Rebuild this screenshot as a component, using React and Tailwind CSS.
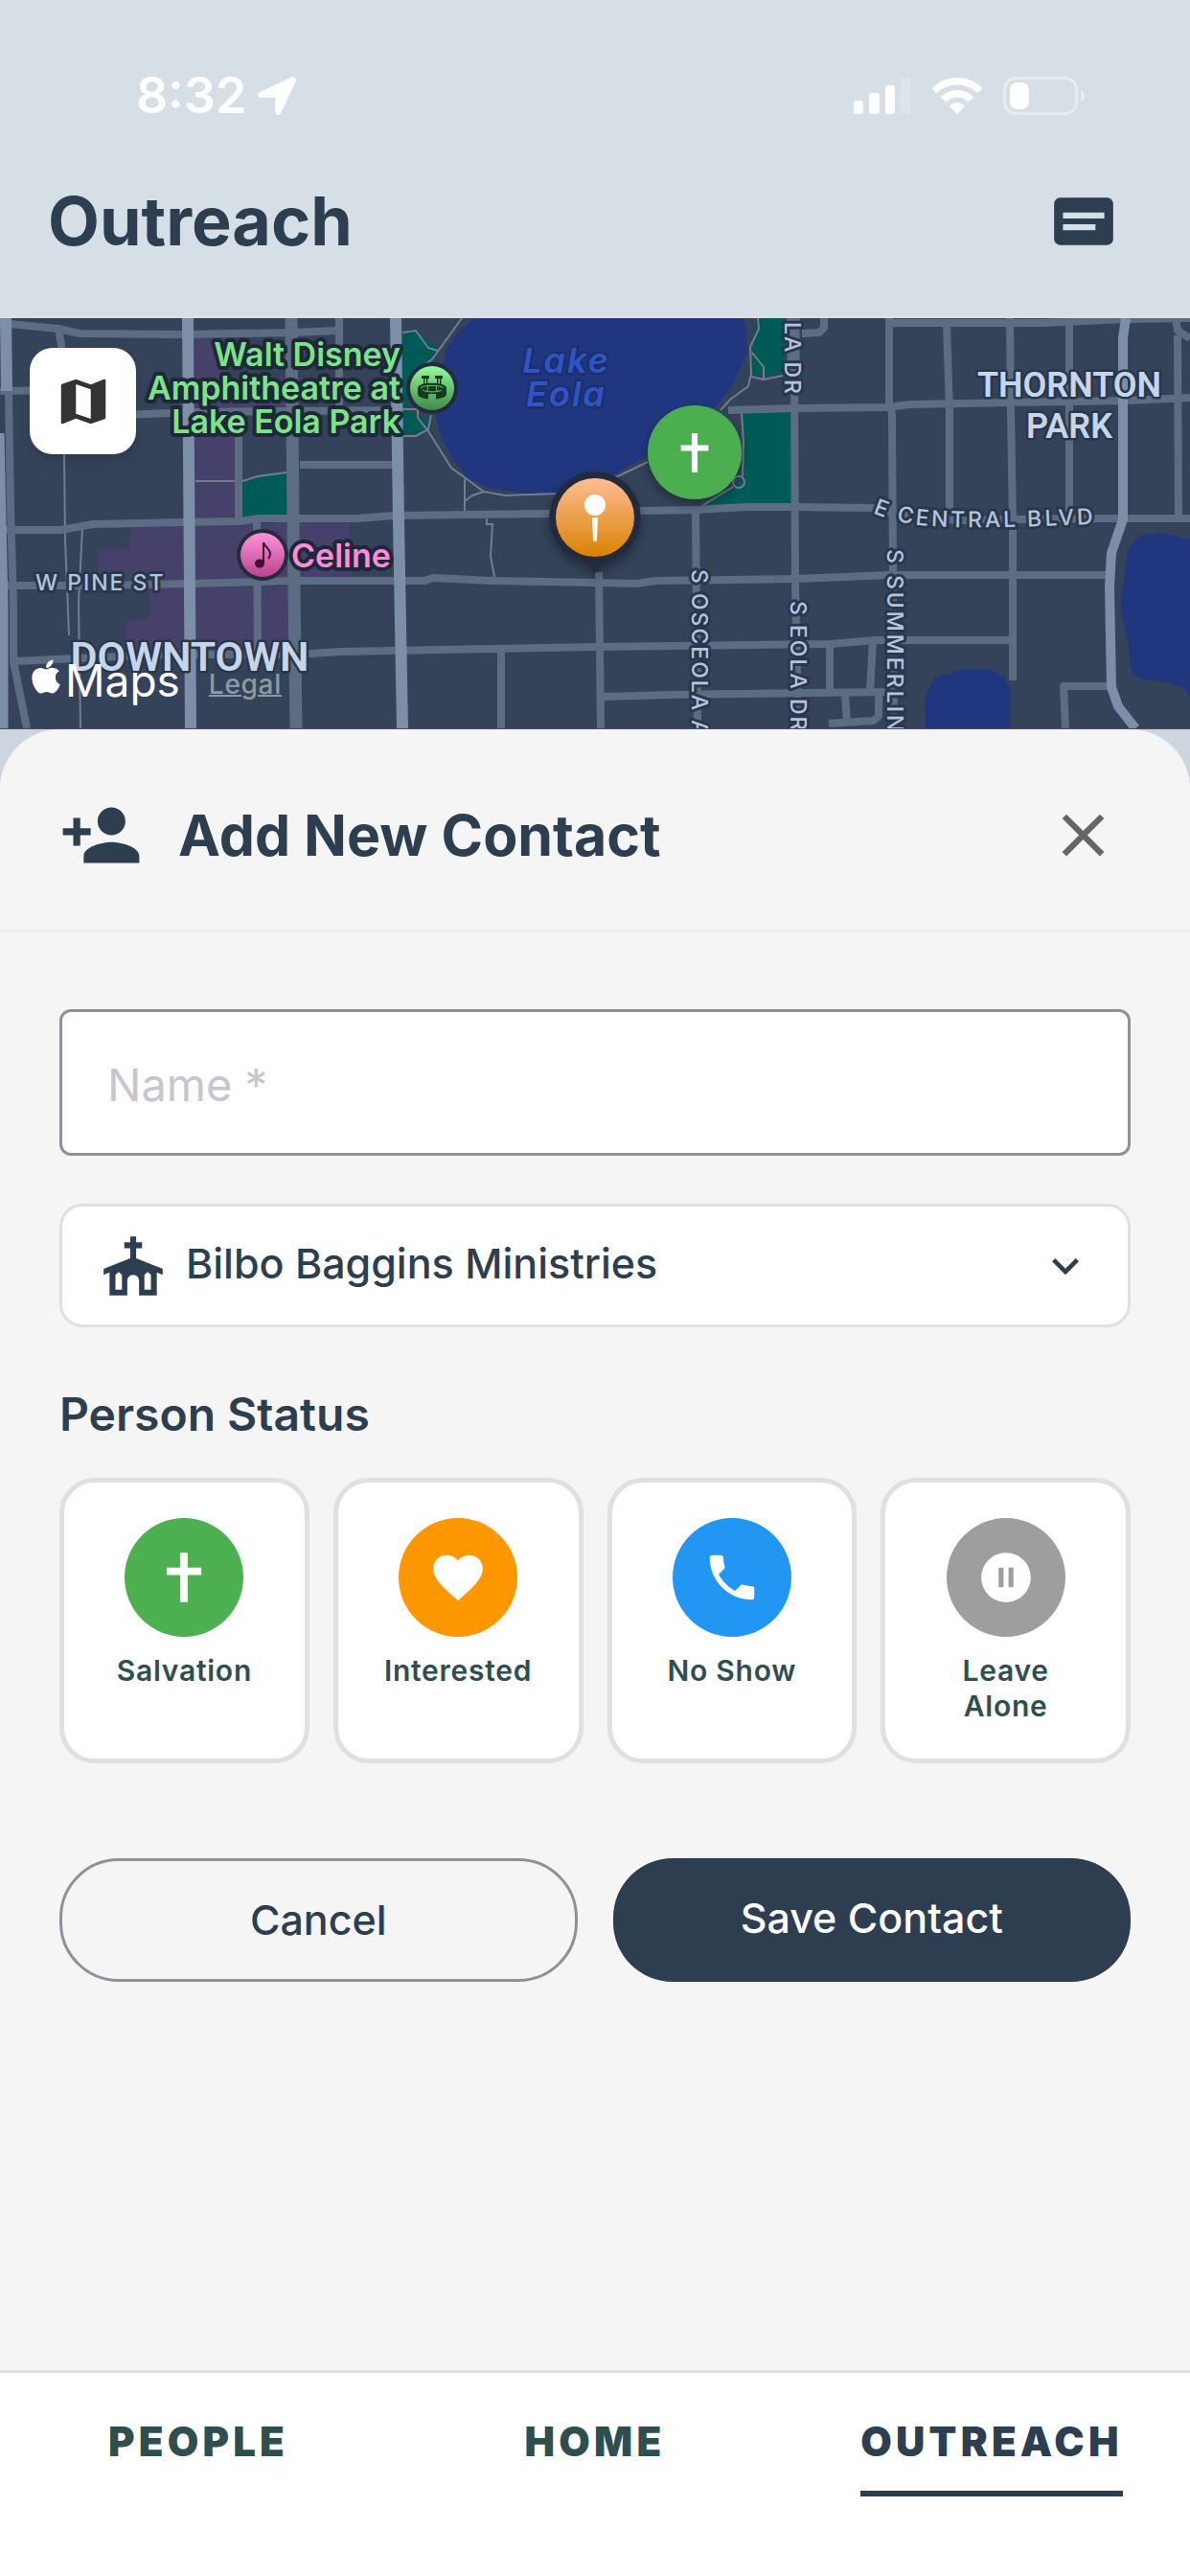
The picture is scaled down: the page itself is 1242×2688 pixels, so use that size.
import { useState } from "react";
import { FaApple } from "react-icons/fa";
import {
  MdClose,
  MdFavorite,
  MdKeyboardArrowDown,
  MdMap,
  MdPauseCircleFilled,
  MdPersonAdd,
  MdPhone,
} from "react-icons/md";

const CROSS = "M10.5 2h3v6H19v3h-5.5v11h-3V11H5V8h5.5z";

const CrossIcon = ({ className }) => (
  <svg viewBox="0 0 24 24" fill="currentColor" className={className} aria-hidden="true">
    <path d={CROSS} />
  </svg>
);

const ChurchIcon = ({ className }) => (
  <svg viewBox="0 0 24 24" fill="currentColor" fillRule="evenodd" className={className} aria-hidden="true">
    <path d="M11 2v2H9v2h2v3.4L2 13v2l2-.8V22h6v-5a2 2 0 0 1 4 0v5h6v-7.8l2 .8v-2l-9-3.6V6h2V4h-2V2zM6 20v-5l1.1-1 1.1 1v5zM15.8 20v-5l1.1-1 1.1 1v5z" />
  </svg>
);

const MessageIcon = ({ className }) => (
  <svg viewBox="0 0 24 24" fill="currentColor" fillRule="evenodd" className={className} aria-hidden="true">
    <path d="M4 4h16a2 2 0 0 1 2 2v12a2 2 0 0 1-2 2H4a2 2 0 0 1-2-2V6a2 2 0 0 1 2-2zM5 9v2h14V9zM5 13v2h11v-2z" />
  </svg>
);

const STATUSES = [
  { id: "salvation", label: "Salvation", color: "bg-[#4caf50]", Icon: CrossIcon },
  { id: "interested", label: "Interested", color: "bg-[#ff9800]", Icon: MdFavorite },
  { id: "noShow", label: "No Show", color: "bg-[#2196f3]", Icon: MdPhone },
  { id: "leaveAlone", label: "Leave Alone", color: "bg-[#9e9e9e]", Icon: MdPauseCircleFilled },
];

const StatusBar = () => (
  <div className="flex h-[132px] items-end justify-between pr-[109px] pl-[142px] text-white">
    <div className="flex h-16 items-center gap-3">
      <span className="text-[52px] leading-none font-semibold">8:32</span>
      <svg viewBox="0 0 40 40" className="size-10" fill="currentColor" aria-hidden="true">
        <path d="M35.2.6 2.3 16.2c-3.5 1.7-2.6 5.9 1 5.9h14.4c.4 0 .6.2.6.6v14.1c0 3.7 4.4 4.5 6 1L39.6 4.9c1.3-3-1.3-5.6-4.4-4.3z" />
      </svg>
    </div>
    <div className="flex h-16 items-center gap-[22px]">
      <svg viewBox="0 0 60 38" className="h-[38px] w-[60px]" fill="currentColor" aria-hidden="true">
        <rect x="0" y="24" width="10" height="14" rx="3" />
        <rect x="16" y="16" width="11" height="22" rx="3" />
        <rect x="33" y="8" width="10" height="30" rx="3" />
        <rect x="49" y="0" width="11" height="38" rx="3" opacity=".2" />
      </svg>
      <svg viewBox="0 0 52 38" className="h-[38px] w-[52px]" fill="currentColor" aria-hidden="true">
        <path d="M26 0C16 0 7 4 .5 10.4c-.6.6-.6 1.2 0 1.8l3.2 3.2c.6.6 1.2.5 1.8 0C11 10.3 18.2 7.5 26 7.5s15 2.8 20.5 7.9c.6.5 1.2.6 1.8 0l3.2-3.2c.6-.6.6-1.2 0-1.8C45 4 36 0 26 0z" />
        <path d="M26 13c-6.300 0-12 2.500-16.400 6.500-.6.6-.6 1.200 0 1.800l3.600 3.500c.6.6 1.200.5 1.800 0 3-2.700 6.800-4.200 11-4.200s8 1.500 11 4.200c.6.5 1.200.6 1.800 0l3.600-3.500c.6-.6.6-1.200 0-1.800C38 15.500 32.300 13 26 13z" />
        <path d="M26 26c-2.700 0-5.200 1-7.200 2.600-.7.5-.7 1.200-.1 1.800l6.300 6.500c.7.7 1.300.7 2 0l6.300-6.500c.6-.6.6-1.300-.1-1.800-2-1.600-4.500-2.600-7.200-2.600z" />
      </svg>
      <svg viewBox="0 0 86 40" className="h-10 w-[86px]" fill="currentColor" aria-hidden="true">
        <rect x="1.5" y="1.5" width="75" height="37" rx="12" fill="none" stroke="currentColor" strokeWidth="3" opacity=".4" />
        <rect x="7" y="6" width="20" height="28" rx="8" />
        <path d="M81 14c5 2.500 5 10 0 12z" opacity=".5" />
      </svg>
    </div>
  </div>
);

const Header = () => (
  <header className="flex h-[200px] items-center justify-between border-b-[3px] border-[#dfdfdf] pr-[74px] pl-[50px]">
    <h1 className="text-[70px] leading-none font-bold">Outreach</h1>
    <button type="button" aria-label="Messages">
      <MessageIcon className="size-[74px]" />
    </button>
  </header>
);

const MINOR_ROADS = [
  "M0 5 61 11 83 16 190 17 304 15 353 13",
  "M0 76 61 75 107 102 198 98 413 96",
  "M313 153H413",
  "M4 221H63L97 215 190 213 250 212 270 209H372L412 206 574 204 668 201 726 200 779 197H829L910 198 945 206 1000 211 1056 210 1136 209H1242",
  "M6 279H103L198 277 309 274H443L452 271 515 274 621 276 665 277 684 274 831 272 930 268H1155",
  "M16 358 79 355 174 351H309L356 348 515 345 621 343 866 340 914 336H1057",
  "M629 395 700 393 843 391 926 390",
  "M61 10 64 28V75",
  "M9 78 11 198 14 298V358L28 428",
  "M354 0V96",
  "M249 98V212",
  "M268 211 269 348",
  "M523 348V428",
  "M625 265 627 428",
  "M726 201 728 428",
  "M829 60 830 275 833 428",
  "M837 16 855 15 860 10V0",
  "M928 0V88L931 100 933 428",
  "M928 5H1088L1175 1 1242 0",
  "M760 96 829 94 926 93 950 90 1057 88 1175 86 1242 83",
  "M988 6 991 98V205",
  "M1054 0 1055 98 1057 211V378",
  "M1116 5V205",
  "M1227 0 1229 13 1242 21",
  "M1229 18 1230 208",
  "M866 340V391",
  "M911 336 908 390",
  "M882 393 884 421",
  "M865 423 912 420 917 415V391",
  "M1112 428 1110 384H1158",
];

const PATHS = [
  "M67 142 68 231 72 331",
  "M86 218 82 298 84 428",
  "M204 170H253L269 165 299 161",
  "M482 0 451 43 430 58 426 68",
  "M420 15 434 13 447 31 457 34",
  "M420 95H436V104L447 118 471 156 505 181 527 185 582 183 645 165 676 150",
  "M420 123H434L447 116 450 101",
  "M485 168V201",
  "M485 191 493 185 505 181",
  "M508 209V215H514L512 248 516 270",
  "M791 0 792 11 783 30 784 58 781 71 762 85 752 96",
  "M785 36 797 51V64L784 61M797 64 817 60",
  "M774 98 776 131 775 165M765 176 734 195",
];

const MapCanvas = () => (
  <svg
    viewBox="0 0 1242 428"
    preserveAspectRatio="xMidYMid slice"
    className="block size-full"
    role="img"
    aria-label="Map of downtown Orlando"
  >
    <defs>
      <linearGradient id="venue" x1="0" y1="0" x2="0" y2="1">
        <stop offset="0" stopColor="#92fb9c" />
        <stop offset="1" stopColor="#3f8a49" />
      </linearGradient>
      <linearGradient id="music" x1="0" y1="0" x2="0" y2="1">
        <stop offset="0" stopColor="#ff92da" />
        <stop offset="1" stopColor="#b8438f" />
      </linearGradient>
      <linearGradient id="pin" x1="0" y1="0" x2="0" y2="1">
        <stop offset="0" stopColor="#ffbd94" />
        <stop offset="1" stopColor="#d98200" />
      </linearGradient>
      <filter id="shadow" x="-50%" y="-50%" width="200%" height="200%">
        <feDropShadow dx="0" dy="5" stdDeviation="6" floodColor="#000" floodOpacity=".35" />
      </filter>
      <path id="central" d="M911 203Q938 215 972 217T1050 218T1160 214" />
    </defs>

    <rect width="1242" height="428" fill="#344359" />

    <g fill="#45416a">
      <path d="M204 20H238V62H300V95H204z" />
      <path d="M204 102H246V212H204z" />
      <path d="M137 218 364 212 368 272 103 274V241H134z" />
      <path d="M156 281 301 280 303 347H132V316L156 313z" />
    </g>
    <g fill="#005a55">
      <path d="M253 170 269 165 299 161V205L253 208z" />
      <path d="M420 15 434 13 457 31 451 43 430 58 425 95 447 108V116L424 122H420z" />
      <path d="M791 0H820V58L783 60 786 20z" />
      <path d="M775 100 826 98V193L734 195 767 175 775 165z" />
    </g>
    <g fill="#20377f">
      <path d="M495 0 478 15 465 33 463 50 455 103 458 117 470 143 488 167 510 177 550 183H600L633 167 677 143 747 93 763 73 780 37 779 10 775 0z" />
      <path d="M966 428 965 396 975 375 1007 366H1033L1049 375 1055 391 1054 428z" />
      <path d="M1242 231 1213 224 1189 227 1177 241 1169 301 1177 338 1181 370 1189 376 1219 380 1235 386 1242 395z" />
    </g>

    <g fill="none" stroke="#727d8e" strokeWidth="2">
      {PATHS.map((d) => <path key={d} d={d} />)}
      <circle cx="771" cy="171" r="6" />
    </g>
    <g fill="none" stroke="#5c6c82" strokeWidth="8" strokeLinejoin="round">
      {MINOR_ROADS.map((d) => <path key={d} d={d} />)}
      <path d="M304 0 306 211 309 428M828 0V68" strokeWidth="13" />
    </g>
    <g fill="none" stroke="#7d8ea8" strokeWidth="12" strokeLinejoin="round">
      <path d="M196 0 199 428" />
      <path d="M413 0 416 211 420 428" />
      <path d="M1175 0 1172 21V210L1160 245 1158 281 1160 385 1167 405 1185 428" strokeWidth="10" />
      <path d="M6 0 7 76" />
      <path d="M0 120 4 300V428" strokeWidth="9" />
    </g>

    {/* Street names */}
    <g fill="#b4c3de" stroke="#29374b" strokeWidth="6" strokeLinejoin="round" paintOrder="stroke" fontSize="23" fontWeight="500" letterSpacing="2">
      <text x="37" y="284">W PINE ST</text>
      <text transform="translate(819 4) rotate(90)">LA DR</text>
      <text transform="translate(722 262) rotate(90)">S OSCEOLA AVE</text>
      <text transform="translate(825 295) rotate(90)">S EOLA DR</text>
      <text transform="translate(926 241) rotate(90)" letterSpacing="3">S SUMMERLIN</text>
      <text letterSpacing="3">
        <textPath href="#central">E CENTRAL BLVD</textPath>
      </text>
    </g>

    {/* Districts */}
    <g fill="#c6d5e9" stroke="#29374b" strokeWidth="5" strokeLinejoin="round" paintOrder="stroke" textAnchor="middle" fontFamily="Roboto, sans-serif" fontWeight="600">
      <text x="198" y="368" fontSize="43">DOWNTOWN</text>
      <text x="1116" y="82" fontSize="36">THORNTON</text>
      <text x="1116" y="125" fontSize="36">PARK</text>
    </g>

    <g fill="#2f55c4" stroke="#1c2f6d" strokeWidth="5" strokeLinejoin="round" paintOrder="stroke" textAnchor="middle" fontSize="36" fontWeight="600" fontStyle="italic" letterSpacing="2">
      <text x="591" y="57">Lake</text>
      <text x="591" y="92">Eola</text>
    </g>

    {/* Points of interest */}
    <g stroke="#1e2838" strokeWidth="8" strokeLinejoin="round" paintOrder="stroke" fontSize="34" fontWeight="600">
      <g fill="#7de38b" textAnchor="end">
        <text x="418" y="50">Walt Disney</text>
        <text x="418" y="85">Amphitheatre at</text>
        <text x="418" y="120">Lake Eola Park</text>
      </g>
      <text x="304" y="260" fill="#ff8bdb">Celine</text>
    </g>

    <g>
      <circle cx="451" cy="73" r="27" fill="#232c3c" />
      <circle cx="451" cy="73" r="23" fill="url(#venue)" />
      <g fill="#173a1e">
        <path d="M440 60h8v3h-8zM454 60h8v3h-8zM442 63h1.5v6H442zM445 63h1.5v6H445zM456 63h1.5v6H456zM459 63h1.5v6H459z" />
        <path d="M436 73c0-7 30-7 30 0v6c0 3-5 5-11 5.500V79h-8v5.500c-6-.5-11-2.500-11-5.500z" />
      </g>
      <path d="M439 73c2-3.500 22-3.500 24 0M441 75c3 2.500 17 2.500 20 0M447 70l-1 6M455 70l1 6" fill="none" stroke="#5fc46b" strokeWidth="1" />
    </g>
    <g>
      <circle cx="274" cy="247" r="27" fill="#232c3c" />
      <circle cx="274" cy="247" r="23" fill="url(#music)" />
      <ellipse cx="271" cy="256" rx="5" ry="4.5" fill="#3d1230" />
      <path d="M275 256V234c1 5 7 6 7 12 0 2-1 4-2 5" fill="none" stroke="#3d1230" strokeWidth="2" />
    </g>

    <g filter="url(#shadow)">
      <path d="M621 160a48 48 0 0 1 20 91.5c-9 4-15 7-20 15-5-8-11-11-20-15A48 48 0 0 1 621 160z" fill="#232c3c" />
    </g>
    <circle cx="621" cy="208" r="41" fill="url(#pin)" />
    <circle cx="621" cy="195" r="11" fill="#fff" />
    <path d="M618 208h6l-1 24c-.5 1.500-3.500 1.500-4 0z" fill="#fff" />

    <circle cx="725" cy="140" r="49" fill="#4caf50" filter="url(#shadow)" />
    <path d={CROSS} fill="#fff" transform="translate(700.4 116) scale(2.05)" />
  </svg>
);

const MapSection = () => (
  <section className="relative h-[429px] overflow-hidden border-b border-[#4a5058]">
    <MapCanvas />
    <button
      type="button"
      aria-label="Map type"
      className="absolute top-[31px] left-[31px] flex size-[111px] items-center justify-center rounded-3xl bg-white text-[#333] shadow-lg"
    >
      <MdMap className="size-[62px]" />
    </button>
    <div className="absolute bottom-[26px] left-8 flex items-end gap-[30px]">
      <span className="flex items-center gap-1 text-white">
        <FaApple className="mb-2 h-10 w-8" />
        <span className="text-[46px] leading-none">Maps</span>
      </span>
      <a href="#legal" className="text-[28px] leading-10 font-medium tracking-wide text-[#8f99a5] underline decoration-2">
        Legal
      </a>
    </div>
  </section>
);

const ContactForm = () => {
  const [name, setName] = useState("");
  const [status, setStatus] = useState(null);

  return (
    <form className="flex flex-col px-[62px] pt-20" onSubmit={(e) => e.preventDefault()}>
      <input
        type="text"
        aria-label="Name"
        placeholder="Name *"
        value={name}
        onChange={(e) => setName(e.target.value)}
        className="h-[153px] rounded-xl border-[3px] border-[#8f909a] bg-white px-[47px] pt-1 text-[47px] text-[#2c3e50] placeholder:text-[#cac4d0] focus:outline-none"
      />

      <div className="mt-[50px] flex h-[129px] items-center rounded-3xl border-[3px] border-[#e0e0e0] bg-white px-[37px]">
        <ChurchIcon className="size-[74px] shrink-0" />
        <select
          aria-label="Ministry"
          defaultValue="bilbo"
          className="ml-[18px] h-full flex-1 appearance-none bg-transparent pb-1 text-[43px] font-medium focus:outline-none"
        >
          <option value="bilbo">Bilbo Baggins Ministries</option>
        </select>
        <MdKeyboardArrowDown className="pointer-events-none size-14 shrink-0" />
      </div>

      <h3 className="mt-[61px] text-[48px] leading-[60px] font-semibold">Person Status</h3>

      <div className="mt-9 grid grid-cols-4 gap-[25px]">
        {STATUSES.map(({ id, label, color, Icon }) => (
          <button
            key={id}
            type="button"
            aria-pressed={status === id}
            onClick={() => setStatus(id)}
            className="flex min-h-[298px] flex-col items-center rounded-[37px] border-[5px] border-[#e0e0e0] bg-white px-10 pt-[37px] pb-8 text-[#2f4f4f]"
          >
            <span className={`flex size-[124px] items-center justify-center rounded-full text-white ${color}`}>
              <Icon className="size-[62px]" />
            </span>
            <span className="mt-[17px] text-[30px] leading-[37px] font-semibold tracking-wide">{label}</span>
          </button>
        ))}
      </div>

      <div className="mt-[99px] grid grid-cols-2 gap-[37px]">
        <button type="button" className="h-[129px] rounded-[62px] border-[3px] border-[#8f909a] text-[43px] font-medium">
          Cancel
        </button>
        <button type="submit" className="h-[129px] rounded-[62px] bg-[#2c3e50] pb-1 text-[43px] font-medium text-white">
          Save Contact
        </button>
      </div>
    </form>
  );
};

const TABS = [
  { label: "PEOPLE", href: "#people" },
  { label: "HOME", href: "#home" },
  { label: "OUTREACH", href: "#outreach", active: true },
];

const BottomNav = () => (
  <nav className="grid h-[215px] grid-cols-3 justify-items-center border-t-[3px] border-[#e0e0e0] bg-white pt-[42px] text-[42px] leading-[60px] font-black tracking-widest">
    {TABS.map(({ label, href, active }) => (
      <a
        key={label}
        href={href}
        aria-current={active ? "page" : undefined}
        className={active
          ? "self-start border-b-[6px] border-[#2c3e50] pb-[21px] text-[#2c3e50]"
          : "self-start pb-[27px] text-[#2f4f4f]"}
      >
        {label}
      </a>
    ))}
  </nav>
);

const App = () => (
  <div className="flex min-h-screen flex-col bg-[#d7dfe6] font-['Inter',sans-serif] text-[#2c3e50]">
    <StatusBar />
    <Header />
    <MapSection />
    <div className="flex flex-1 flex-col bg-[#cdd6de]">
      <main className="flex-1 rounded-t-[62px] bg-[#f5f5f5] pb-16">
        <div className="flex h-[212px] items-center border-b-[3px] border-[#f0f0f0] pt-3 pr-[74px] pl-[62px]">
          <MdPersonAdd className="size-[87px]" />
          <h2 className="ml-[37px] flex-1 text-[59px] leading-none font-bold">Add New Contact</h2>
          <button type="button" aria-label="Close" className="text-[#666]">
            <MdClose className="size-[75px]" />
          </button>
        </div>
        <ContactForm />
      </main>
    </div>
    <BottomNav />
  </div>
);

export default App;
